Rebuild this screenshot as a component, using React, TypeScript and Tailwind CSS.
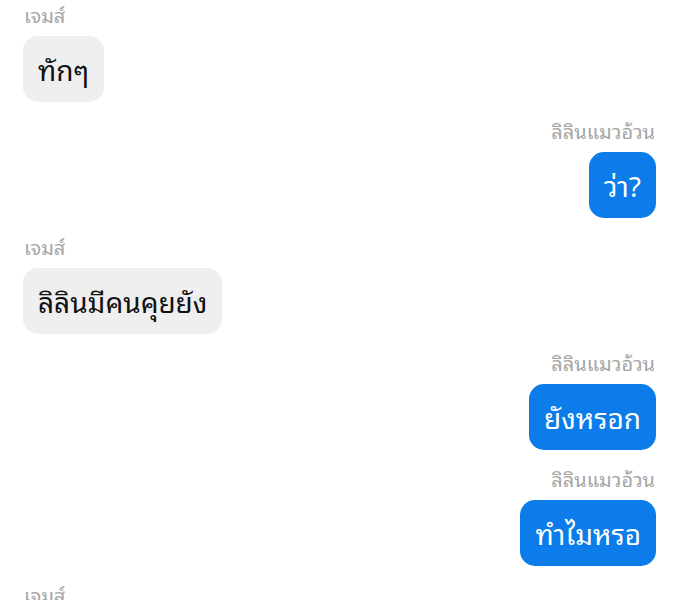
import React from 'react';

type Msg = { from: string; text: string; mine: boolean };

const messages: Msg[] = [
  { from: 'เจมส์', text: 'ทักๆ', mine: false },
  { from: 'ลิลินแมวอ้วน', text: 'ว่า?', mine: true },
  { from: 'เจมส์', text: 'ลิลินมีคนคุยยัง', mine: false },
  { from: 'ลิลินแมวอ้วน', text: 'ยังหรอก', mine: true },
  { from: 'ลิลินแมวอ้วน', text: 'ทำไมหรอ', mine: true },
  { from: 'เจมส์', text: '...', mine: false },
];

const Bubble = ({ msg }: { msg: Msg }) => (
  <div className={`flex flex-col ${msg.mine ? 'items-end' : 'items-start'}`}>
    <div className="text-[20px] leading-[28px] text-[#a6a6a6] px-[1px]">{msg.from}</div>
    <div
      className={`mt-[8px] h-[66px] flex items-center rounded-[15px] px-[15px] text-[28px] ${
        msg.mine ? 'bg-[#0b7ce9] text-white' : 'bg-[#efefef] text-[#111]'
      }`}
    >
      {msg.text}
    </div>
  </div>
);

export default function App() {
  return (
    <div
      className="w-[680px] h-[600px] overflow-hidden bg-white pl-[23px] pr-[24px] flex flex-col gap-[14px]"
      style={{ fontFamily: '"Noto Sans Thai Looped", "DejaVu Sans", sans-serif' }}
    >
      {messages.map((m, i) => (
        <Bubble key={i} msg={m} />
      ))}
    </div>
  );
}
